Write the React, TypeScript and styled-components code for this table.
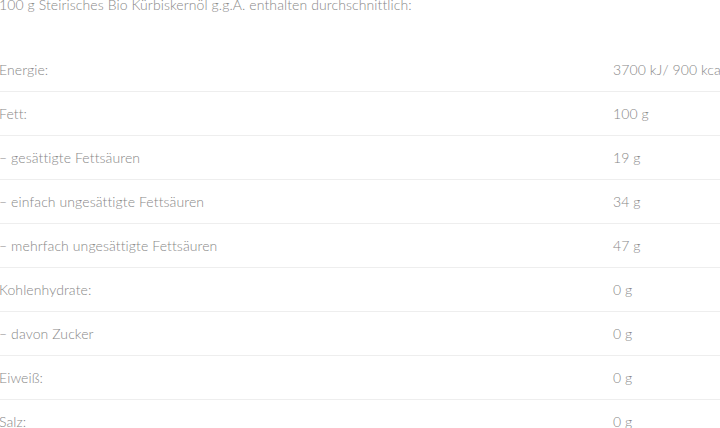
import React from "react";
import styled, { createGlobalStyle } from "styled-components";

const GlobalStyle = createGlobalStyle`
  html, body {
    margin: 0;
    padding: 0;
    background: #ffffff;
    overflow: hidden;
  }
  body {
    font-family: Lato, "Liberation Sans", sans-serif;
    font-weight: 300;
    color: #878787;
  }
`;

const Wrapper = styled.div`
  width: 780px;
  margin: -6px 0 0 -1px;
`;

const Intro = styled.p`
  margin: 0;
  font-size: 14px;
  line-height: 22px;
  letter-spacing: 0.1px;
`;

const Table = styled.div`
  margin-top: 32px;
  display: flex;
  flex-direction: column;
`;

const Row = styled.div`
  box-sizing: border-box;
  display: grid;
  grid-template-columns: 614px 1fr;
  height: 44px;
  align-items: center;
  border-bottom: 1px solid #eeeeee;
  font-size: 14px;
  letter-spacing: 0.1px;
`;

const Cell = styled.span`
  white-space: nowrap;
`;

const rows: [string, string][] = [
  ["Energie:", "3700 kJ/ 900 kcal"],
  ["Fett:", "100 g"],
  ["– gesättigte Fettsäuren", "19 g"],
  ["– einfach ungesättigte Fettsäuren", "34 g"],
  ["– mehrfach ungesättigte Fettsäuren", "47 g"],
  ["Kohlenhydrate:", "0 g"],
  ["– davon Zucker", "0 g"],
  ["Eiweiß:", "0 g"],
  ["Salz:", "0 g"],
];

export default function App() {
  return (
    <>
      <GlobalStyle />
      <Wrapper>
        <Intro>100 g Steirisches Bio Kürbiskernöl g.g.A. enthalten durchschnittlich:</Intro>
        <Table>
          {rows.map(([label, value]) => (
            <Row key={label}>
              <Cell>{label}</Cell>
              <Cell>{value}</Cell>
            </Row>
          ))}
        </Table>
      </Wrapper>
    </>
  );
}
